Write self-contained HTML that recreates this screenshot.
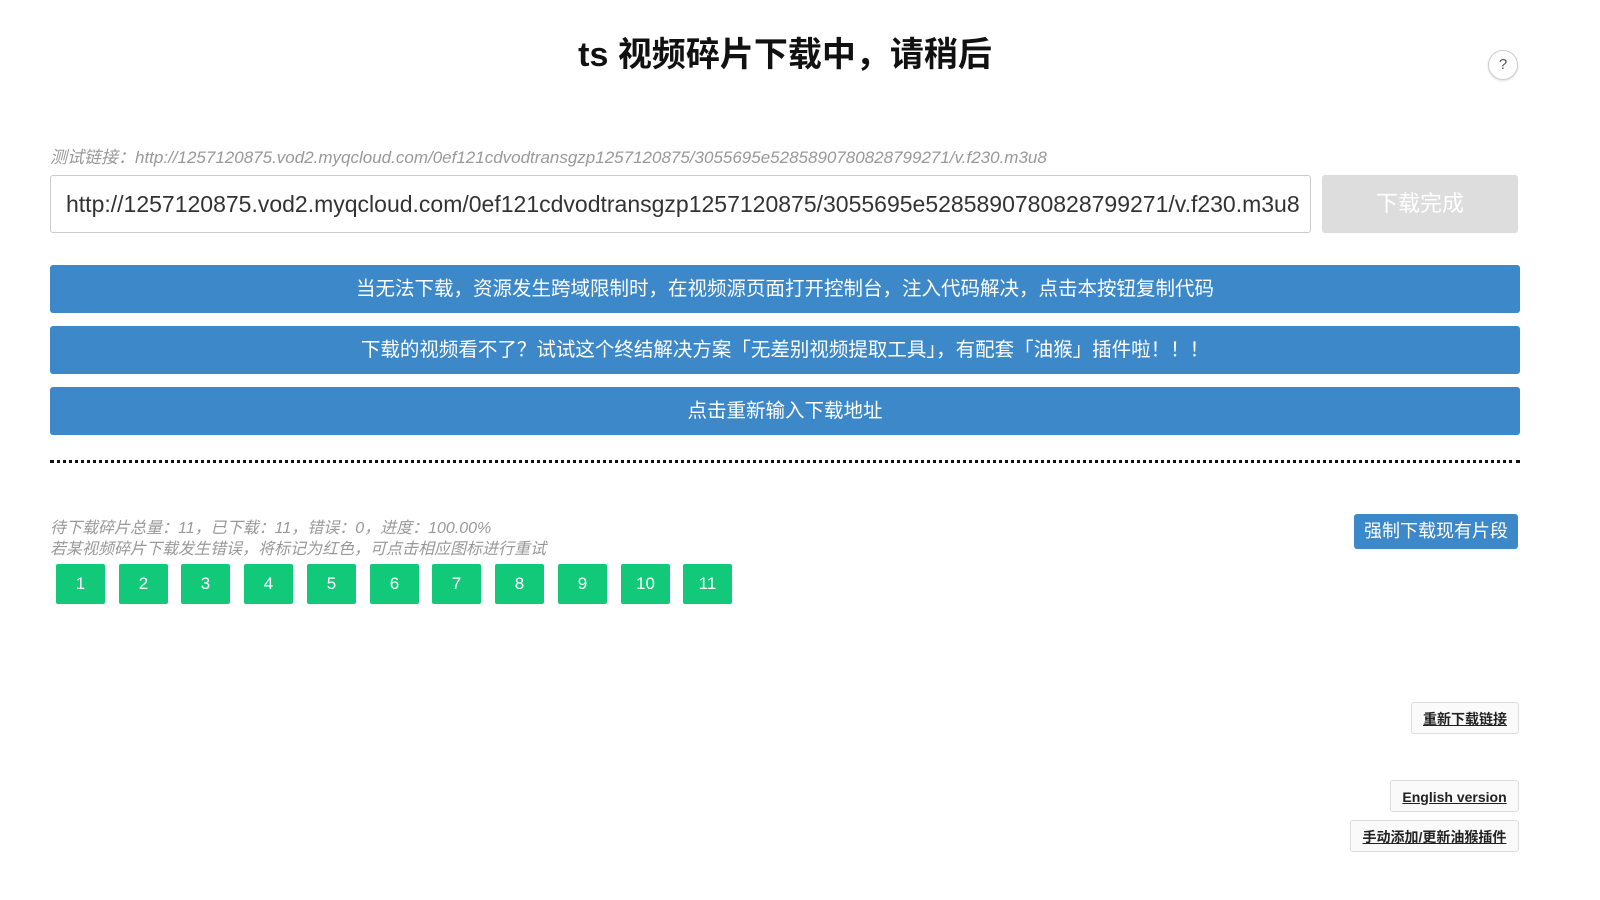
<!DOCTYPE html>
<html><head><meta charset="utf-8"><style>
body{margin:0;width:1600px;height:900px;background:#fff;font-family:"Liberation Sans","Noto Sans CJK SC",sans-serif;position:relative;overflow:hidden}
.a{position:absolute}
h1{position:absolute;left:0;width:1570px;top:30px;margin:0;text-align:center;font-size:34px;font-weight:bold;color:#111;line-height:50px}
.help{left:1488px;top:50px;width:28px;height:28px;border:1px solid #ccc;border-radius:50%;text-align:center;line-height:28px;font-size:15px;color:#555;box-shadow:0 1px 2px #ddd}
.test{left:50px;top:143px;font-size:17px;font-style:italic;color:#999;white-space:nowrap}
.inp{left:50px;top:175px;width:1244px;height:56px;border:1px solid #ccc;border-radius:3px;font-size:23px;color:#333;line-height:56px;padding-left:15px;white-space:nowrap;overflow:hidden;box-sizing:content-box}
.done{left:1322px;top:175px;width:196px;height:58px;background:#ddd;border-radius:3px;color:#fff;font-size:22px;text-align:center;line-height:58px}
.bar{left:50px;width:1470px;height:48px;background:#3d88c9;border-radius:3px;color:#fff;font-size:19.5px;text-align:center;line-height:48px}
.dot{left:50px;top:460px;width:1470px;border-top:3px dotted #111}
.st{left:50px;font-size:16px;font-style:italic;color:#999;white-space:nowrap}
.g{top:564px;width:49px;height:40px;background:#12c97a;color:#fff;text-align:center;line-height:40px;font-size:17px;border-radius:2px}
.force{left:1354px;top:514px;width:164px;height:35px;background:#3d88c9;border-radius:3px;color:#fff;font-size:18px;text-align:center;line-height:35px}
.sb{height:32px;border:1px solid #ddd;border-radius:3px;background:#fafafa;text-align:center;line-height:32px;font-size:14px;font-weight:bold;color:#222;text-decoration:underline;box-sizing:border-box}
</style></head><body>
<h1>ts 视频碎片下载中，请稍后</h1>
<div class="a help">?</div>
<div class="a test">测试链接：http://1257120875.vod2.myqcloud.com/0ef121cdvodtransgzp1257120875/3055695e5285890780828799271/v.f230.m3u8</div>
<div class="a inp">http://1257120875.vod2.myqcloud.com/0ef121cdvodtransgzp1257120875/3055695e5285890780828799271/v.f230.m3u8</div>
<div class="a done">下载完成</div>
<div class="a bar" style="top:265px">当无法下载，资源发生跨域限制时，在视频源页面打开控制台，注入代码解决，点击本按钮复制代码</div>
<div class="a bar" style="top:326px">下载的视频看不了？试试这个终结解决方案「无差别视频提取工具」，有配套「油猴」插件啦！！！</div>
<div class="a bar" style="top:387px">点击重新输入下载地址</div>
<div class="a dot"></div>
<div class="a st" style="top:514px">待下载碎片总量：11，已下载：11，错误：0，进度：100.00%</div>
<div class="a st" style="top:535px">若某视频碎片下载发生错误，将标记为红色，可点击相应图标进行重试</div>
<div class="a g" style="left:56px">1</div>
<div class="a g" style="left:119px">2</div>
<div class="a g" style="left:181px">3</div>
<div class="a g" style="left:244px">4</div>
<div class="a g" style="left:307px">5</div>
<div class="a g" style="left:370px">6</div>
<div class="a g" style="left:432px">7</div>
<div class="a g" style="left:495px">8</div>
<div class="a g" style="left:558px">9</div>
<div class="a g" style="left:621px">10</div>
<div class="a g" style="left:683px">11</div>
<div class="a force">强制下载现有片段</div>
<div class="a sb" style="left:1411px;top:702px;width:108px">重新下载链接</div>
<div class="a sb" style="left:1390px;top:780px;width:129px">English version</div>
<div class="a sb" style="left:1350px;top:820px;width:169px">手动添加/更新油猴插件</div>
</body></html>
